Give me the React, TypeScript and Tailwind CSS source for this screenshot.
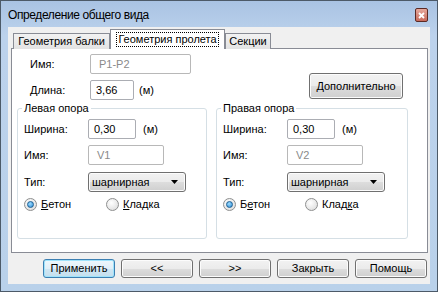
import React from 'react';

const ui = "font-['Liberation_Sans',Arial,sans-serif] text-[11px] leading-[13px] text-black";

const PushButton: React.FC<{ children: React.ReactNode; primary?: boolean; className?: string }> = ({
  children,
  primary,
  className = '',
}) => (
  <button
    className={`flex items-center justify-center rounded-[3px] border ${
      primary
        ? 'border-[#3c7fb1] bg-[linear-gradient(#eef7fc_0%,#e0eff8_50%,#cfe6f3_51%,#c4dfee_100%)] shadow-[inset_0_0_0_1px_#9fe3fb]'
        : 'border-[#707070] bg-[linear-gradient(#f2f2f2_0%,#ebebeb_50%,#dddddd_51%,#cfcfcf_100%)] shadow-[inset_0_0_0_1px_#fcfcfc]'
    } ${className}`}
  >
    {children}
  </button>
);

const TextBox: React.FC<{ value: string; width: string; muted?: boolean }> = ({ value, width, muted }) => (
  <div
    className={`flex h-[20px] items-center rounded-[2px] border bg-white ${width} ${
      muted ? 'border-[#b8b8b8] pl-[8px] text-[#8a8a8a]' : 'border-[#abadb3] pl-[5px]'
    }`}
  >
    {value}
  </div>
);

const Combo: React.FC<{ value: string }> = ({ value }) => (
  <div className="flex h-[20px] w-[98px] items-center justify-between rounded-[3px] border border-[#707070] bg-[linear-gradient(#f2f2f2_0%,#ebebeb_50%,#dddddd_51%,#cfcfcf_100%)] pl-[3px] pr-[6px] shadow-[inset_0_0_0_1px_#fcfcfc]">
    <span>{value}</span>
    <svg width="8" height="4" viewBox="0 0 8 4">
      <path d="M0 0h7L3.5 4z" fill="#000" />
    </svg>
  </div>
);

const Radio: React.FC<{ checked?: boolean; children: React.ReactNode; className?: string }> = ({
  checked,
  children,
  className = '',
}) => (
  <div className={`flex items-center gap-[4px] ${className}`}>
    <span className="flex h-[13px] w-[13px] items-center justify-center rounded-full border border-[#8e8f8f] bg-[radial-gradient(circle_at_40%_35%,#ffffff,#d8d8d8)]">
      {checked && (
        <span className="h-[7px] w-[7px] rounded-full border border-[#1c5f92] bg-[radial-gradient(circle_at_40%_35%,#9edcff,#2a8ad4)]" />
      )}
    </span>
    <span>{children}</span>
  </div>
);

const SupportGroup: React.FC<{
  title: string;
  name: string;
  width: string;
  concrete: React.ReactNode;
  masonry: React.ReactNode;
}> = ({ title, name, width, concrete, masonry }) => (
  <fieldset className={`h-[138px] rounded-[3px] border border-[#d5dfe5] px-[6px] ${width}`}>
    <legend className="-ml-[2px] px-[2px] leading-[14px]">{title}</legend>
    <div className="mt-[4px] flex items-center">
      <span className="w-[64px]">Ширина:</span>
      <TextBox value="0,30" width="w-[48px]" />
      <span className="ml-[7px]">(м)</span>
    </div>
    <div className="mt-[6px] flex items-center">
      <span className="w-[64px]">Имя:</span>
      <TextBox value={name} width="w-[76px]" muted />
    </div>
    <div className="mt-[7px] flex items-center">
      <span className="w-[64px]">Тип:</span>
      <Combo value="шарнирная" />
    </div>
    <div className="mt-[6px] flex items-center">
      <Radio checked className="w-[82px]">
        {concrete}
      </Radio>
      <Radio>{masonry}</Radio>
    </div>
  </fieldset>
);

const App: React.FC = () => {
  return (
    <div className={`${ui} h-[292px] w-[438px] overflow-hidden`}>
      <div className="flex h-full w-full flex-col border border-[#4c5a68] bg-[linear-gradient(#a9c3e3_0%,#bcd2ec_12%,#b9d1ea_100%)]">
        {/* title bar */}
        <div className="flex h-[26px] shrink-0 items-center justify-between pl-[7px] pr-[9px]">
          <span className="pt-[2px] text-[12px] tracking-[-0.4px]">Определение общего вида</span>
          <div className="mt-[2px] flex h-[14px] w-[13px] items-center justify-center rounded-[2px] border border-[#5b2a24] bg-[linear-gradient(#e6a89c,#c76a5b)]">
            <svg width="7" height="7" viewBox="0 0 7 7">
              <path d="M1 1l5 5M6 1L1 6" stroke="#fff" strokeWidth="1.8" />
            </svg>
          </div>
        </div>

        {/* client area */}
        <div className="mx-[7px] mb-[7px] flex flex-1 flex-col bg-[#f0f0f0] pl-[3px] pr-[2px] pt-[2px]">
          {/* tabs */}
          <div className="relative z-10 -mb-px flex h-[20px] items-end pl-[2px]">
            <div className="flex h-[16px] w-[97px] items-center justify-center border border-b-0 border-[#898c95] bg-[linear-gradient(#f2f2f2,#e3e3e3)]">
              Геометрия балки
            </div>
            <div className="flex h-[20px] w-[115px] items-center justify-center border border-b-0 border-[#898c95] bg-white">
              <span className="border border-dotted border-black px-[1px] leading-[13px]">Геометрия пролета</span>
            </div>
            <div className="flex h-[16px] w-[46px] items-center justify-center border border-b-0 border-[#898c95] bg-[linear-gradient(#f2f2f2,#e3e3e3)]">
              Секции
            </div>
          </div>

          {/* tab panel */}
          <div className="h-[205px] border border-[#898c95] bg-white pl-[5px]">
            <div className="flex">
              <div className="flex-1 pl-[13px]">
                <div className="mt-[5px] flex items-center">
                  <span className="w-[60px]">Имя:</span>
                  <TextBox value="P1-P2" width="w-[101px]" muted />
                </div>
                <div className="mt-[6px] flex items-center">
                  <span className="w-[60px]">Длина:</span>
                  <TextBox value="3,66" width="w-[44px]" />
                  <span className="ml-[5px]">(м)</span>
                </div>
              </div>
              <PushButton className="mb-[1px] mr-[24px] h-[26px] w-[94px] self-end">Дополнительно</PushButton>
            </div>

            <div className="mt-[1px] flex gap-[9px]">
              <SupportGroup
                title="Левая опора"
                name="V1"
                width="w-[190px]"
                concrete={
                  <>
                    <u>Б</u>етон
                  </>
                }
                masonry={
                  <>
                    <u>К</u>ладка
                  </>
                }
              />
              <SupportGroup
                title="Правая опора"
                name="V2"
                width="w-[192px]"
                concrete={
                  <>
                    Б<u>е</u>тон
                  </>
                }
                masonry={
                  <>
                    Клад<u>к</u>а
                  </>
                }
              />
            </div>
          </div>

          {/* dialog buttons */}
          <div className="mt-[6px] flex justify-end gap-[6px] pr-[1px]">
            <PushButton primary className="h-[19px] w-[72px]">
              Применить
            </PushButton>
            <PushButton className="h-[19px] w-[72px]">&lt;&lt;</PushButton>
            <PushButton className="h-[19px] w-[72px]">&gt;&gt;</PushButton>
            <PushButton className="h-[19px] w-[72px]">Закрыть</PushButton>
            <PushButton className="h-[19px] w-[72px]">Помощь</PushButton>
          </div>
        </div>
      </div>
    </div>
  );
};

export default App;
